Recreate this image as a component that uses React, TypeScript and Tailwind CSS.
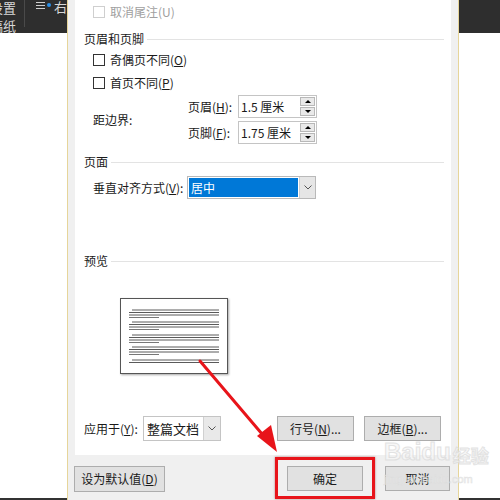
import { ReactNode } from 'react';

const FONT = { fontFamily: '"Noto Sans CJK SC", "Microsoft YaHei", sans-serif' };

function CheckBox({ label, disabled }: { label: ReactNode; disabled?: boolean }) {
  return (
    <div className="flex items-center h-[18px] pl-[18px]">
      <div
        className={`w-[12px] h-[12px] bg-white border ${
          disabled ? 'border-[#cfcfcf]' : 'border-[#333]'
        }`}
      />
      <span className={`ml-[5px] ${disabled ? 'text-[#a0a0a0]' : 'text-[#1a1a1a]'}`}>{label}</span>
    </div>
  );
}

function GroupTitle({ title }: { title: string }) {
  return (
    <div className="flex items-center h-[24px] pl-[9px] pr-[7px]">
      <span className="text-[#1a1a1a]">{title}</span>
      <div className="flex-1 ml-[3px] h-px bg-[#e3e3e3]" />
    </div>
  );
}

function SpinBox({ value }: { value: string }) {
  return (
    <div className="flex items-center w-[79px] h-[23px] bg-white border border-[#c4c4c4] pl-[2px] pr-[1px]">
      <span className="flex-1 text-[#1a1a1a]">{value}</span>
      <div className="flex flex-col w-[15px] h-[19px] gap-px">
        <div className="flex-1 flex items-center justify-center bg-[#e9e9e9] border border-[#b8b8b8]">
          <div className="w-0 h-0 border-l-[3px] border-r-[3px] border-b-[3px] border-l-transparent border-r-transparent border-b-black" />
        </div>
        <div className="flex-1 flex items-center justify-center bg-[#e9e9e9] border border-[#b8b8b8]">
          <div className="w-0 h-0 border-l-[3px] border-r-[3px] border-t-[3px] border-l-transparent border-r-transparent border-t-black" />
        </div>
      </div>
    </div>
  );
}

function Chevron() {
  return (
    <svg width="8" height="5" viewBox="0 0 8 5">
      <path d="M0.5 0.5 L4 4 L7.5 0.5" fill="none" stroke="#555" strokeWidth="1" />
    </svg>
  );
}

function Button({ children, className = '' }: { children: ReactNode; className?: string }) {
  return (
    <div
      className={`flex items-center justify-center h-[25px] bg-[#e1e1e1] border border-[#adadad] text-[#1a1a1a] ${className}`}
    >
      {children}
    </div>
  );
}

function PreviewPage() {
  const groups = [312, 324, 337, 349];
  return (
    <div className="ml-[45px] mt-[25px] w-[108px] h-[76px] bg-white border border-[#555] shadow-[1px_1px_2px_rgba(0,0,0,0.35)]">
      <svg width="106" height="74" viewBox="0 0 106 74">
        {groups.map((g) => {
          const y = g - 301;
          return (
            <g key={g} stroke="#5a5a5a" strokeWidth="1">
              <line x1="11" y1={y} x2="98" y2={y} />
              <line x1="8" y1={y + 2.5} x2="98" y2={y + 2.5} />
              <line x1="8" y1={y + 5} x2="98" y2={y + 5} />
              <line x1="8" y1={y + 7.5} x2="38" y2={y + 7.5} stroke="#777" />
            </g>
          );
        })}
        <g stroke="#5a5a5a" strokeWidth="1">
          <line x1="11" y1="61" x2="98" y2="61" />
          <line x1="8" y1="63.5" x2="98" y2="63.5" />
        </g>
      </svg>
    </div>
  );
}

export default function App() {
  return (
    <div className="relative w-[500px] h-[500px] overflow-hidden flex text-[12px] leading-none bg-white" style={FONT}>
      {/* left background */}
      <div className="w-[67px] flex flex-col overflow-hidden">
        <div className="h-[33px] bg-[#2e2e2e] flex text-[#d8d8d8]">
          <div className="flex flex-col ml-[-10px] w-[40px] pt-[1px] gap-[4px] whitespace-nowrap">
            <span className="text-[13px] leading-[14px]">设置</span>
            <span className="text-[13px] leading-[14px]">稿纸</span>
          </div>
          <div className="w-px h-[27px] bg-[#4a4a4a]" />
          <div className="flex items-start ml-[11px] pt-[1px] gap-[2px] whitespace-nowrap">
            <div className="flex flex-col gap-[2px] pt-[1px]">
              <div className="w-[9px] h-px bg-[#cfcfcf]" />
              <div className="w-[9px] h-px bg-[#cfcfcf]" />
              <div className="w-[9px] h-px bg-[#cfcfcf]" />
            </div>
            <div className="w-[4px] h-[4px] rounded-full bg-[#2a8fe8] mt-[2px]" />
            <span className="text-[13px] leading-[11px] ml-[1px]">右</span>
          </div>
        </div>
        <div className="flex-1 bg-white" />
        <div className="h-[2px] bg-[#333]" />
      </div>

      {/* dialog */}
      <div className="w-[392px] flex flex-col bg-[#f0f0f0] border-l border-r border-[#e6d59a]">
        <div className="mx-[7px] h-[455px] bg-white flex flex-col">
          <div className="h-[24px] flex items-center">
            <CheckBox label="取消尾注(U)" disabled />
          </div>
          <div className="mt-[3px]">
            <GroupTitle title="页眉和页脚" />
          </div>
          <CheckBox label={<>奇偶页不同(<u>O</u>)</>} />
          <div className="mt-[5px]">
            <CheckBox label={<>首页不同(<u>P</u>)</>} />
          </div>
          <div className="mt-[3px] flex pl-[18px]">
            <div className="w-[95px] self-center text-[#1a1a1a]">距边界:</div>
            <div className="flex flex-col gap-[3px]">
              <div className="flex items-center">
                <span className="w-[50px] text-[#1a1a1a]">
                  页眉(<u>H</u>):
                </span>
                <SpinBox value="1.5 厘米" />
              </div>
              <div className="flex items-center">
                <span className="w-[50px] text-[#1a1a1a]">
                  页脚(<u>F</u>):
                </span>
                <SpinBox value="1.75 厘米" />
              </div>
            </div>
          </div>
          <div className="mt-[6px]">
            <GroupTitle title="页面" />
          </div>
          <div className="mt-[2px] flex items-center pl-[18px] h-[23px]">
            <span className="w-[94px] text-[#1a1a1a]">
              垂直对齐方式(<u>V</u>):
            </span>
            <div className="flex w-[129px] h-[23px] border border-[#b9b9b9] bg-white">
              <div className="flex-1 m-px bg-[#0078d7] text-white flex items-center pl-[2px]">居中</div>
              <div className="w-[16px] bg-[#e6e6e6] border-l border-[#cfcfcf] flex items-center justify-center">
                <Chevron />
              </div>
            </div>
          </div>
          <div className="mt-[50px]">
            <GroupTitle title="预览" />
          </div>
          <PreviewPage />
          <div className="mt-[42px] flex items-center h-[25px] pl-[9px]">
            <span className="w-[59px] text-[#1a1a1a]">
              应用于(<u>Y</u>):
            </span>
            <div className="flex w-[78px] h-[25px] border border-[#c4c4c4] bg-white">
              <div className="flex-1 flex items-center pl-[3px] text-[13px] text-[#1a1a1a]">整篇文档</div>
              <div className="w-[17px] bg-[#e9e9e9] border-l border-[#d0d0d0] flex items-center justify-center">
                <Chevron />
              </div>
            </div>
            <Button className="ml-[56px] w-[77px]">
              <span>
                行号(<u>N</u>)...
              </span>
            </Button>
            <Button className="ml-[10px] w-[77px]">
              <span>
                边框(<u>B</u>)...
              </span>
            </Button>
          </div>
        </div>
        <div className="mt-[11px] flex items-start pl-[6px]">
          <Button className="w-[91px] h-[26px]">
            <span>
              设为默认值(<u>D</u>)
            </span>
          </Button>
          <div className="relative ml-[122px]">
            <Button className="w-[76px] h-[25px] border-[#0078d7]">确定</Button>
            <div className="absolute left-[-12px] right-[-12px] top-[-9px] bottom-[-8px] border-[3px] border-[#e8141a] shadow-[0_0_2px_rgba(120,0,0,0.5)]" />
          </div>
          <Button className="ml-[22px] w-[65px]">取消</Button>
        </div>
      </div>

      {/* right background */}
      <div className="flex-1 flex flex-col">
        <div className="h-[33px] bg-[#2e2e2e]" />
        <div className="flex-1 bg-white" />
        <div className="h-[2px] bg-[#333]" />
      </div>

      {/* red arrow */}
      <svg className="absolute left-0 top-0 pointer-events-none" width="500" height="500" viewBox="0 0 500 500">
        <line x1="200" y1="361" x2="268" y2="441" stroke="#e8141a" strokeWidth="3" strokeLinecap="round" />
        <polygon points="277,452 257,436 271,425" fill="#e8141a" />
      </svg>

      {/* watermark */}
      <div className="absolute left-[384px] top-[440px] flex flex-col items-start pointer-events-none select-none whitespace-nowrap opacity-80">
        <div className="flex items-end text-[#f6f6f6] [-webkit-text-stroke:1px_#dcdcdc] font-bold">
          <span className="text-[24px] leading-none" style={{ fontFamily: '"Liberation Sans", sans-serif' }}>
            Baidu
          </span>
          <span className="text-[18px] leading-none ml-[2px]">经验</span>
        </div>
        <span
          className="text-[11px] text-[#f2f2f2] [-webkit-text-stroke:0.5px_#dcdcdc] mt-[10px]"
          style={{ fontFamily: '"Liberation Sans", sans-serif' }}
        >
          jingyan.baidu.com
        </span>
      </div>
    </div>
  );
}
